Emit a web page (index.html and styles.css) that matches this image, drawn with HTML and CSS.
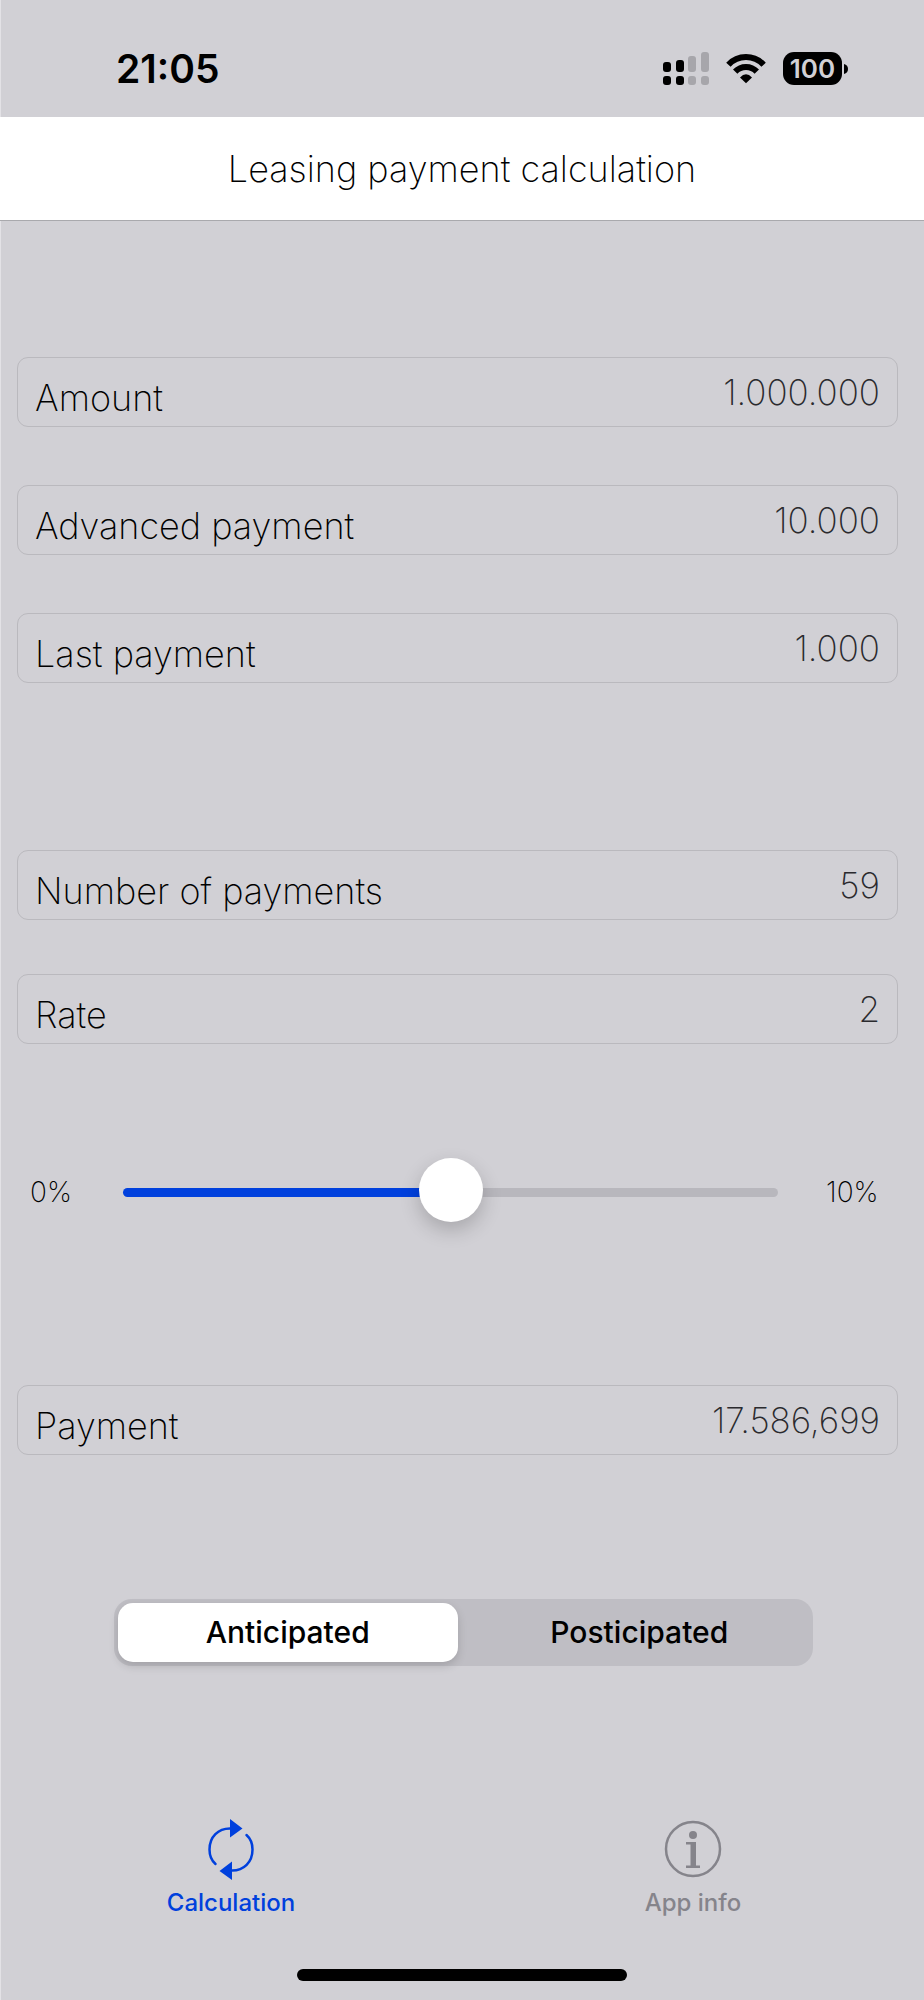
FILE: index.html
```html
<!DOCTYPE html>
<html lang="en">

<head>
  <meta charset="UTF-8">
  <meta name="viewport" content="width=device-width, initial-scale=1.0">
  <title>Leasing payment calculation</title>
  <link rel="stylesheet" href="styles.css">
</head>

<body>
  <div class="status-bar">
    <span class="time">21:05</span>
    <div class="status-icons">
      <svg class="signal" width="46" height="33" viewBox="0 0 46 33">
        <g fill="#000">
          <rect x="0" y="10" width="8" height="10" rx="3" />
          <rect x="13" y="8" width="8" height="12" rx="3" />
          <rect x="0" y="24" width="8" height="9" rx="3" />
          <rect x="13" y="24" width="8" height="9" rx="3" />
        </g>
        <g fill="#a7a6ab">
          <rect x="25" y="4" width="8" height="16" rx="3" />
          <rect x="38" y="0" width="8" height="20" rx="3" />
          <rect x="25" y="24" width="8" height="9" rx="3" />
          <rect x="38" y="24" width="8" height="9" rx="3" />
        </g>
      </svg>
      <svg class="wifi" width="40" height="30" viewBox="0 0 40 30">
        <g fill="none" stroke="#000" stroke-width="6">
          <path d="M2.4 10.8A24 24 0 0 1 37.6 10.8" />
          <path d="M9.2 17.6A14.8 14.8 0 0 1 30.8 17.6" />
        </g>
        <path d="M20 29.2L14 23.4Q20 17 26 23.4Z" fill="#000" />
      </svg>
      <div class="battery">
        <span class="battery-level">100</span>
        <svg width="5" height="12" viewBox="0 0 5 12">
          <path d="M0 1Q4 2 4 6Q4 10 0 11Z" fill="#000" />
        </svg>
      </div>
    </div>
  </div>

  <header>
    <h1>Leasing payment calculation</h1>
  </header>

  <main>
    <div class="fields amounts">
      <div class="field">
        <label for="amount">Amount</label>
        <input type="text" id="amount" value="1.000.000">
      </div>
      <div class="field">
        <label for="advanced">Advanced payment</label>
        <input type="text" id="advanced" value="10.000">
      </div>
      <div class="field">
        <label for="last">Last payment</label>
        <input type="text" id="last" value="1.000">
      </div>
    </div>

    <div class="fields terms">
      <div class="field">
        <label for="number">Number of payments</label>
        <input type="text" id="number" value="59">
      </div>
      <div class="field">
        <label for="rate">Rate</label>
        <input type="text" id="rate" value="2">
      </div>
    </div>

    <div class="slider">
      <label for="rate-slider">0%</label>
      <input type="range" id="rate-slider" min="0" max="10" value="5">
      <span class="slider-max">10%</span>
    </div>

    <div class="field">
      <label for="payment">Payment</label>
      <input type="text" id="payment" value="17.586,699" readonly>
    </div>

    <div class="segmented">
      <input type="radio" name="mode" id="anticipated" checked>
      <label for="anticipated">Anticipated</label>
      <input type="radio" name="mode" id="posticipated">
      <label for="posticipated">Posticipated</label>
    </div>
  </main>

  <nav class="tab-bar">
    <a class="tab active" href="#calculation">
      <svg width="64" height="64" viewBox="0 0 64 64">
        <g fill="none" stroke="currentColor" stroke-width="2.5" stroke-linecap="round">
          <path d="M32 11.5C19 11 10.5 20 10.5 32.5C10.5 38 13 44 16.5 47" />
          <path d="M47.5 18C52 22 53.5 27 53.5 32.5C53.5 45 45 54 32 53.5" />
        </g>
        <path d="M31 2L43.5 11.5L31 20.5ZM33 44.5L20.5 54L33 63Z" fill="currentColor" />
      </svg>
      <span>Calculation</span>
    </a>
    <a class="tab" href="#info">
      <svg width="64" height="64" viewBox="0 0 64 64">
        <circle cx="32" cy="32" r="27" fill="none" stroke="currentColor" stroke-width="2.5" />
        <circle cx="32" cy="18" r="4" fill="currentColor" />
        <path d="M25 25H35V48.5H39V51H25V48.5H29.5V27.5H25Z" fill="currentColor" />
      </svg>
      <span>App info</span>
    </a>
  </nav>
  <div class="home-indicator"></div>
</body>

</html>
```
FILE: styles.css
```css
* {
  box-sizing: border-box;
}

body {
  display: flex;
  flex-direction: column;
  min-height: 100vh;
  margin: 0;
  font-family: Inter, "Liberation Sans", sans-serif;
  background-color: #d1d0d5;
  box-shadow: inset 1px 0 #e3e2e6; /* light line down the left edge */
  color: #000;
}

/* Status bar */
.status-bar {
  display: flex;
  justify-content: space-between;
  align-items: center;
  height: 117px;
  padding: 20px 75px 0 116px;
}

.time {
  font-size: 39px;
  font-weight: 600;
}

.status-icons {
  display: flex;
  align-items: center;
  gap: 17px;
}

.battery {
  display: flex;
  align-items: center;
  gap: 2px;
}

.battery-level {
  width: 59px;
  border-radius: 11px;
  background-color: #000;
  color: #d1d0d5;
  font-size: 26px;
  font-weight: 600;
  line-height: 33px;
  text-align: center;
}

/* Title */
header {
  padding: 28px 0 27px;
  border-bottom: 1px solid #a9a9ad;
  background-color: #fff;
  text-align: center;
}

h1 {
  margin: 0;
  font-size: 36px;
  font-weight: 200;
  line-height: 48px;
}

main {
  padding: 136px 26px 0 17px;
}

/* Form rows */
.fields {
  display: flex;
  flex-direction: column;
}

.amounts {
  gap: 58px;
  margin-bottom: 167px;
}

.terms {
  gap: 54px;
  margin-bottom: 116px;
}

.field {
  display: flex;
  height: 70px;
  padding: 0 17px;
  border: 1px solid #bab9be;
  border-radius: 11px;
}

.field label {
  padding-top: 16px;
  font-size: 36px;
  font-weight: 200;
  line-height: 48px;
  white-space: nowrap;
}

.field input {
  flex: 1;
  min-width: 0;
  padding: 0;
  border: 0;
  background: none;
  color: #2a2a2e;
  font-family: inherit;
  font-size: 35px;
  font-weight: 200;
  text-align: right;
}

/* Rate slider */
.slider {
  display: flex;
  justify-content: space-between;
  align-items: center;
  margin-bottom: 161px;
  padding: 0 20px 0 13px;
  font-size: 28px;
  font-weight: 200;
}

.slider label,
.slider-max {
  width: 52px;
}

.slider-max {
  text-align: right;
}

.slider input {
  flex: 1;
  height: 64px;
  margin: 0 48px 0 41px;
  background: none;
  appearance: none;
}

.slider input::-webkit-slider-runnable-track {
  height: 9px;
  border-radius: 5px;
  background: linear-gradient(to right, #0040dd 50%, #b8b7bd 50%);
}

.slider input::-webkit-slider-thumb {
  width: 64px;
  height: 64px;
  margin-top: -30px;
  border-radius: 50%;
  background-color: #fff;
  box-shadow: 0 8px 20px rgba(0, 0, 0, 0.2);
  appearance: none;
}

/* Anticipated / Posticipated switch */
.segmented {
  display: flex;
  gap: 12px;
  margin: 144px 85px 0 97px;
  padding: 4px;
  border-radius: 18px;
  background-color: #bfbec4;
}

.segmented input {
  position: absolute;
  opacity: 0;
}

.segmented label {
  flex: 1 1 0;
  border-radius: 15px;
  font-size: 30px;
  font-weight: 500;
  line-height: 59px;
  text-align: center;
}

.segmented input:checked + label {
  background-color: #fff;
  box-shadow: 0 4px 10px rgba(0, 0, 0, 0.15);
}

/* Bottom tabs */
.tab-bar {
  display: flex;
  margin-top: auto;
}

.tab {
  display: flex;
  flex: 1;
  flex-direction: column;
  align-items: center;
  gap: 7px;
  color: #85848b;
  font-size: 24px;
  font-weight: 500;
  line-height: 30px;
  text-decoration: none;
}

.tab.active {
  color: #0040dd;
}

.home-indicator {
  width: 330px;
  height: 12px;
  margin: 51px auto 19px;
  border-radius: 6px;
  background-color: #000;
}
```
